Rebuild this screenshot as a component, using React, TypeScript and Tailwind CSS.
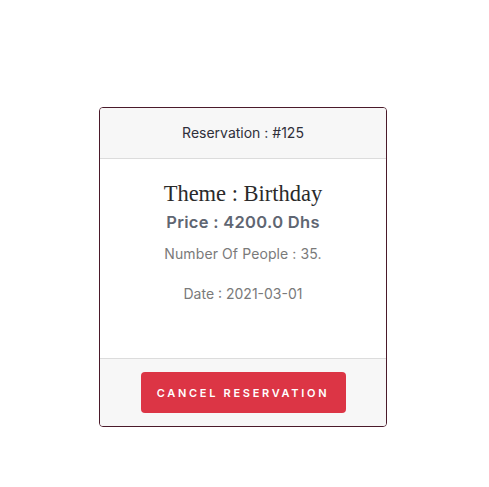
export default function App() {
  return (
    <div className="min-h-[487px] w-full bg-white pt-[107px] pl-[99px]" style={{ fontFamily: "Inter, 'Open Sans', sans-serif" }}>
      <div className="w-[288px] h-[320px] flex flex-col rounded-[4px] border border-[#4a1a2a] overflow-hidden">
        <div className="h-[51px] shrink-0 flex items-center justify-center bg-[#f7f7f7] border-b border-[#dcdcdc] text-[14px] text-[#2f2f3a] pb-[1px]">
          Reservation : #125
        </div>
        <div className="flex-1 flex flex-col items-center pt-[20px]">
          <h2 className="text-[22.5px] leading-[30px] text-[#2a2a2a]" style={{ fontFamily: "'Liberation Serif', serif" }}>
            Theme : Birthday
          </h2>
          <p className="mt-[1px] text-[16.5px] leading-[24px] font-semibold text-[#5f6672] tracking-[0.3px]">Price : 4200.0 Dhs</p>
          <p className="mt-[9px] text-[14px] leading-[22px] text-[#7a7a7a] tracking-[0.1px]">Number Of People : 35.</p>
          <p className="mt-[18px] text-[14px] leading-[22px] text-[#7a7a7a]">Date : 2021-03-01</p>
        </div>
        <div className="h-[68px] shrink-0 flex items-center justify-center bg-[#f7f7f7] border-t border-[#dcdcdc]">
          <button className="w-[205px] h-[41px] rounded-[4px] bg-[#dc3545] text-white text-[11px] font-semibold tracking-[2.7px] pt-[1px]">
            CANCEL RESERVATION
          </button>
        </div>
      </div>
    </div>
  );
}
